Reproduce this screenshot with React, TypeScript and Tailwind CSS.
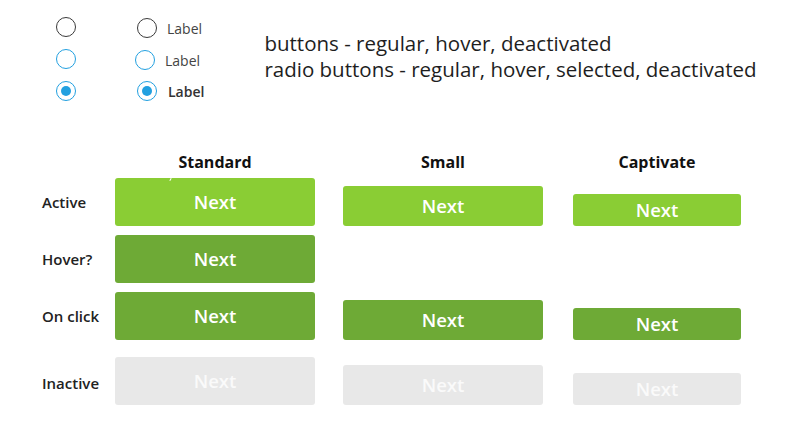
import React from 'react';

type Tone = 'active' | 'pressed' | 'off';

const tones: Record<Tone, string> = {
  active: 'bg-[#8acd34] text-white',
  pressed: 'bg-[#6eaa36] text-white',
  off: 'bg-[#e8e8e8] text-[#fafafa]',
};

function Btn({ tone, size }: { tone: Tone; size: 'std' | 'sm' | 'cap' }) {
  const dims = size === 'std' ? 'w-[200px] h-[48px]' : size === 'sm' ? 'w-[200px] h-[40px]' : 'w-[168px] h-[32px]';
  return (
    <div className={`${dims} ${tones[tone]} rounded-[3px] flex items-center justify-center text-[18.5px] font-semibold`}>
      Next
    </div>
  );
}

function Radio({ color, selected }: { color: 'gray' | 'blue'; selected?: boolean }) {
  return (
    <div
      className={`w-[20px] h-[20px] rounded-full border flex items-center justify-center ${
        color === 'gray' ? 'border-[#3a3a3a]' : 'border-[#22a0e0]'
      }`}
    >
      {selected && <div className="w-[10px] h-[10px] rounded-full bg-[#22a0e0]" />}
    </div>
  );
}

function Row({ children, className }: { children: React.ReactNode; className?: string }) {
  return (
    <div className={`grid grid-cols-[73px_228px_230px_168px] items-end ${className ?? ''}`}>
      {children}
    </div>
  );
}

export default function App() {
  return (
    <div className="w-[799px] h-[441px] bg-white text-[#222] overflow-hidden" style={{ fontFamily: '"Open Sans", "Noto Sans", sans-serif' }}>
      {/* radios + notes */}
      <div className="flex pt-[17px]">
        <div className="ml-[56px] flex flex-col gap-[12px]">
          <Radio color="gray" />
          <Radio color="blue" />
          <Radio color="blue" selected />
        </div>
        <div className="ml-[61px] flex flex-col gap-[12px] text-[14px] text-[#444]">
          <div className="flex items-center gap-[10px] h-[20px] mt-[1px]">
            <Radio color="gray" />
            <span>Label</span>
          </div>
          <div className="flex items-center gap-[10px] h-[20px] -ml-[2px]">
            <Radio color="blue" />
            <span>Label</span>
          </div>
          <div className="flex items-center gap-[11px] h-[20px] -mt-[1px]">
            <Radio color="blue" selected />
            <span className="font-semibold text-[#333]">Label</span>
          </div>
        </div>
        <div className="ml-[60px] mt-[13px] text-[20.5px] leading-[26px] text-[#1e1e1e]">
          <div>buttons - regular, hover, deactivated</div>
          <div>radio buttons - regular, hover, selected, deactivated</div>
        </div>
      </div>

      {/* button matrix */}
      <div className="ml-[42px] mt-[53px]">
        <div className="grid grid-cols-[73px_228px_230px_168px] text-[16px] font-bold text-[#111] leading-none">
          <div />
          <div className="w-[200px] text-center">Standard</div>
          <div className="w-[200px] text-center">Small</div>
          <div className="w-[168px] text-center">Captivate</div>
        </div>

        <Row className="mt-[8px]">
          <div className="self-center text-[15px] font-semibold">Active</div>
          <div className="relative">
            <Btn tone="active" size="std" />
            <span className="absolute left-[55px] top-0 w-[1px] h-[3px] bg-white rotate-[30deg]" />
          </div>
          <Btn tone="active" size="sm" />
          <Btn tone="active" size="cap" />
        </Row>

        <Row className="mt-[9px]">
          <div className="self-center text-[15px] font-semibold">Hover?</div>
          <Btn tone="pressed" size="std" />
          <div />
          <div />
        </Row>

        <Row className="mt-[9px]">
          <div className="self-center text-[15px] font-semibold">On click</div>
          <Btn tone="pressed" size="std" />
          <Btn tone="pressed" size="sm" />
          <Btn tone="pressed" size="cap" />
        </Row>

        <Row className="mt-[17px]">
          <div className="self-center text-[15px] font-semibold pt-[4px]">Inactive</div>
          <Btn tone="off" size="std" />
          <Btn tone="off" size="sm" />
          <Btn tone="off" size="cap" />
        </Row>
      </div>
    </div>
  );
}
